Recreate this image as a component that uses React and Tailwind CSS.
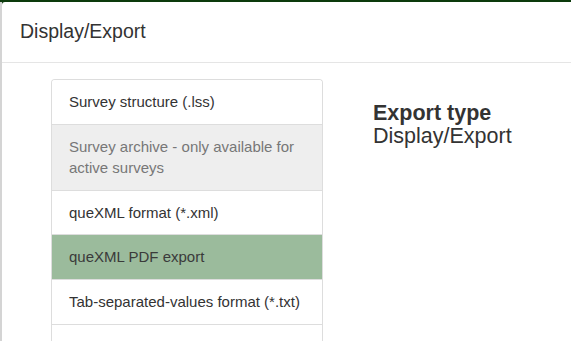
import React from 'react';

const exportTypes = [
  { label: 'Survey structure (.lss)' },
  { label: 'Survey archive - only available for active surveys', disabled: true },
  { label: 'queXML format (*.xml)' },
  { label: 'queXML PDF export', active: true },
  { label: 'Tab-separated-values format (*.txt)' },
  { label: '' },
];

const ExportItem = ({ label, disabled, active }) => {
  let tone = 'bg-white text-[#333]';
  if (disabled) tone = 'bg-[#eeeeee] text-[#777]';
  if (active) tone = 'bg-[#9bbb9c] text-[#3a3a3a]';
  return (
    <div className={`${tone} border-b border-[#dddddd] px-[17px] py-[11px] min-h-[44.6px] leading-[21.6px]`}>
      {label}
    </div>
  );
};

export default function App() {
  return (
    <div className="w-[571px] h-[341px] overflow-hidden flex flex-col bg-[#0c3a0c]" style={{ fontFamily: '"Liberation Sans", Arial, sans-serif' }}>
      <div className="h-[2px] shrink-0" />
      <div className="flex flex-1 min-h-0">
        {/* page behind the modal */}
        <div className="w-[2px] shrink-0 bg-[#d4d4d4]" />
        <div className="flex-1 bg-white rounded-tl-[3px] flex flex-col">
          <div className="h-[61px] shrink-0 border-b border-[#e5e5e5] px-[18px] flex items-center text-[19.5px] text-[#333]">
            Display/Export
          </div>
          <div className="flex pl-[49px] pt-[16px]">
            <div className="w-[272px] shrink-0 border border-b-0 border-[#dddddd] rounded-t-[4px] overflow-hidden text-[15px]">
              {exportTypes.map((t, i) => (
                <ExportItem key={i} {...t} />
              ))}
            </div>
            <div className="ml-[50px] pt-[23px] text-[21.5px] leading-[23px] text-[#333]">
              <div className="font-bold">Export type</div>
              <div>Display/Export</div>
            </div>
          </div>
        </div>
      </div>
    </div>
  );
}
